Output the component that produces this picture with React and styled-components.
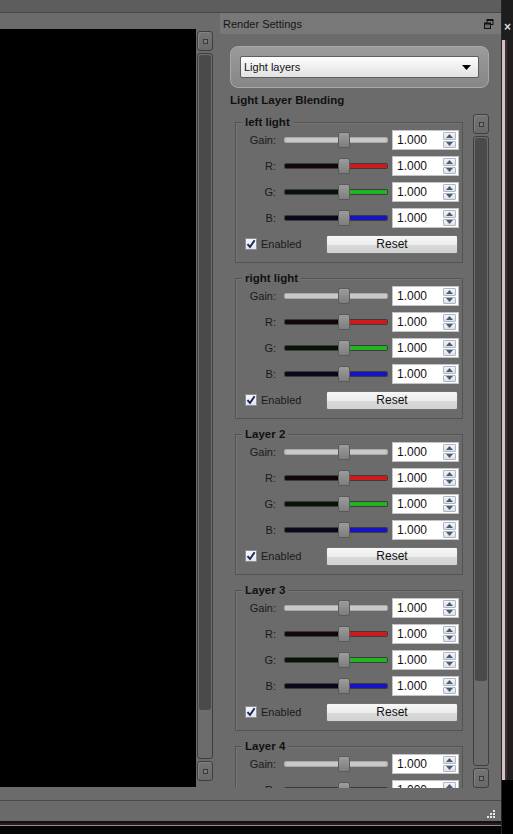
import React from "react";
import styled, { createGlobalStyle } from "styled-components";

const GlobalStyle = createGlobalStyle`
    * { box-sizing: border-box; }
    body {
        margin: 0;
        background: #000;
        font-family: "Liberation Sans", Arial, sans-serif;
    }
`;

const layers = ['left light', 'right light', 'Layer 2', 'Layer 3', 'Layer 4'];

const channels = [
    { label: 'Gain:', kind: 'gain' },
    { label: 'R:', kind: 'r' },
    { label: 'G:', kind: 'g' },
    { label: 'B:', kind: 'b' },
];

const trackColors = {
    gain: ['#c8c8c8', '#c8c8c8'],
    r: ['#120707', '#d01a1a'],
    g: ['#081208', '#22b422'],
    b: ['#08081a', '#1414c4'],
};

function RestoreIcon() {
    return (
        <svg width="10" height="10" viewBox="0 0 10 10">
            <rect x="3" y="0.5" width="6" height="5" fill="none" stroke="#111" strokeWidth="1" />
            <rect x="3" y="0.5" width="6" height="1.5" fill="#111" />
            <rect x="0.5" y="4" width="6" height="5.5" fill="#6b6b6b" stroke="#111" strokeWidth="1" />
            <rect x="0.5" y="4" width="6" height="1.5" fill="#111" />
        </svg>
    );
}

function ScrollBar({ thumb }) {
    return (
        <VScroll>
            <ScrollButton><ScrollGlyph /></ScrollButton>
            <Track>
                <Thumb style={{ height: thumb }} />
            </Track>
            <ScrollButton><ScrollGlyph /></ScrollButton>
        </VScroll>
    );
}

function Slider({ kind, pos }) {
    const [left, right] = trackColors[kind];
    return (
        <SliderBox>
            <SliderTrack $left={left} $right={right} $pos={pos} $light={kind === 'gain'} />
            <SliderThumb style={{ left: `calc(${pos}% - 6px)` }} />
        </SliderBox>
    );
}

function Spinner({ value }) {
    return (
        <Spin>
            <SpinValue>{value}</SpinValue>
            <SpinButtons>
                <SpinArrow>
                    <svg width="7" height="4" viewBox="0 0 7 4"><path d="M0 4 L3.5 0 L7 4 Z" fill="#4d5b72" /></svg>
                </SpinArrow>
                <SpinArrow>
                    <svg width="7" height="4" viewBox="0 0 7 4"><path d="M0 0 L3.5 4 L7 0 Z" fill="#4d5b72" /></svg>
                </SpinArrow>
            </SpinButtons>
        </Spin>
    );
}

function LayerGroup({ name }) {
    return (
        <Group>
            <Legend>{name}</Legend>
            {channels.map((c) => (
                <Row key={c.label}>
                    <RowLabel>{c.label}</RowLabel>
                    <Slider kind={c.kind} pos={58} />
                    <Spinner value="1.000" />
                </Row>
            ))}
            <Row>
                <Check>
                    <CheckBox>
                        <svg width="10" height="10" viewBox="0 0 10 10">
                            <path d="M1.5 5.2 L4 8 L8.6 1.2" fill="none" stroke="#1c2a63" strokeWidth="2" />
                        </svg>
                    </CheckBox>
                    Enabled
                </Check>
                <ResetButton>Reset</ResetButton>
            </Row>
        </Group>
    );
}

export default function App() {
    return <>
        <GlobalStyle />
        <Frame>
            <Window>
                <TopStrip />
                <Body>
                    <LeftPane>
                        <Viewport />
                        <LeftScroll>
                            <ScrollBar thumb={655} />
                        </LeftScroll>
                    </LeftPane>
                    <RightPane>
                        <TitleBar>
                            <span>Render Settings</span>
                            <RestoreIcon />
                        </TitleBar>
                        <DropBox>
                            <Select>
                                <span>Light layers</span>
                                <svg width="9" height="5" viewBox="0 0 9 5"><path d="M0 0 L9 0 L4.5 5 Z" fill="#000" /></svg>
                            </Select>
                        </DropBox>
                        <Heading>Light Layer Blending</Heading>
                        <ScrollArea>
                            <Groups>
                                {layers.map((l) => <LayerGroup key={l} name={l} />)}
                            </Groups>
                            <RightScroll>
                                <ScrollBar thumb={543} />
                            </RightScroll>
                        </ScrollArea>
                    </RightPane>
                </Body>
                <StatusBar>
                    <svg width="9" height="9" viewBox="0 0 9 9">
                        {[[7, 1], [4, 4], [7, 4], [1, 7], [4, 7], [7, 7]].map(([x, y]) => (
                            <rect key={`${x}-${y}`} x={x} y={y} width="2" height="2" fill="#e8e8e8" />
                        ))}
                    </svg>
                </StatusBar>
                <Footer />
            </Window>
            <Edge>
                <EdgeCap>×</EdgeCap>
                <EdgeBody />
            </Edge>
        </Frame>
    </>;
}

const Frame = styled.div`
    display: flex;
    width: 513px;
    height: 834px;
    overflow: hidden;
    background: #000;
`;

const Window = styled.div`
    width: 502px;
    display: flex;
    flex-direction: column;
    background: #6b6b6b;
    border-right: 1px solid #262626;
`;

const TopStrip = styled.div`
    height: 13px;
    background: #5d5d5d;
    border-bottom: 1px solid #474747;
`;

const Body = styled.div`
    height: 787px;
    display: flex;
`;

const LeftPane = styled.div`
    width: 213px;
    display: flex;
    padding: 16px 0 13px 0;
`;

const Viewport = styled.div`
    width: 196px;
    background: #000;
`;

const LeftScroll = styled.div`
    width: 16px;
    margin: 2px 0 6px 1px;
    display: flex;
`;

const RightScroll = styled.div`
    width: 16px;
    margin-left: 10px;
    display: flex;
`;

const VScroll = styled.div`
    flex: 1;
    display: flex;
    flex-direction: column;
    gap: 2px;
`;

const ScrollButton = styled.div`
    height: 20px;
    border: 1px solid #3e3e3e;
    border-radius: 3px;
    background: linear-gradient(#747474, #696969);
    box-shadow: inset 1px 1px 0 #828282;
    display: flex;
    align-items: center;
    justify-content: center;
`;

const ScrollGlyph = styled.div`
    width: 5px;
    height: 5px;
    border: 1px solid #3a3a3a;
    background: #7a7a7a;
`;

const Track = styled.div`
    flex: 1;
    border: 1px solid #3e3e3e;
    border-radius: 3px;
    background: #6c6c6c;
    padding: 1px;
`;

const Thumb = styled.div`
    border-radius: 3px;
    background: #4a4a4a;
`;

const RightPane = styled.div`
    flex: 1;
    margin-left: 7px;
    display: flex;
    flex-direction: column;
`;

const TitleBar = styled.div`
    height: 21px;
    display: flex;
    align-items: center;
    justify-content: space-between;
    padding: 0 7px 0 3px;
    background: #787878;
    font-size: 11px;
    color: #161616;
`;

const DropBox = styled.div`
    height: 42px;
    margin: 12px 12px 0 10px;
    padding: 0 9px;
    display: flex;
    align-items: center;
    border: 1px solid #a8a8a8;
    border-radius: 8px;
    background: linear-gradient(#9b9b9b, #868686);
`;

const Select = styled.div`
    flex: 1;
    height: 22px;
    display: flex;
    align-items: center;
    justify-content: space-between;
    padding: 0 7px 0 3px;
    border: 1px solid #5e5e5e;
    border-radius: 2px;
    background: linear-gradient(#fdfdfd, #e2e2e2);
    font-size: 11px;
    color: #111;
`;

const Heading = styled.div`
    margin: 5px 0 0 10px;
    font-size: 11.5px;
    line-height: 14px;
    font-weight: bold;
    color: #111;
`;

const ScrollArea = styled.div`
    flex: 1;
    display: flex;
    margin: 7px 0 12px 0;
    padding-left: 15px;
    min-height: 0;
`;

const Groups = styled.div`
    width: 228px;
    display: flex;
    flex-direction: column;
    gap: 15px;
    padding-top: 8px;
    overflow: hidden;
`;

const Group = styled.div`
    position: relative;
    flex-shrink: 0;
    padding: 4px 0 5px 0;
    border: 1px solid #535353;
    box-shadow: inset 1px 1px 0 #767676;
`;

const Legend = styled.div`
    position: absolute;
    top: -8px;
    left: 6px;
    padding: 0 3px;
    background: #6b6b6b;
    font-size: 11.5px;
    line-height: 14px;
    font-weight: bold;
    color: #111;
`;

const Row = styled.div`
    height: 26px;
    display: flex;
    align-items: center;
`;

const RowLabel = styled.div`
    width: 40px;
    margin-right: 9px;
    text-align: right;
    font-size: 11px;
    color: #1a1a1a;
`;

const SliderBox = styled.div`
    position: relative;
    width: 102px;
    height: 26px;
    margin-right: 5px;
    display: flex;
    align-items: center;
`;

const SliderTrack = styled.div`
    width: 100%;
    height: 4px;
    border-radius: 1px;
    background: linear-gradient(to right, ${(p) => p.$left} 0 ${(p) => p.$pos}%, ${(p) => p.$right} ${(p) => p.$pos}% 100%);
    box-shadow: ${(p) => (p.$light ? '0 0 0 1px #a9a9a9' : '0 0 0 1px #3c3c3c')};
`;

const SliderThumb = styled.div`
    position: absolute;
    top: 5px;
    width: 12px;
    height: 16px;
    border: 1px solid #5a5a5a;
    border-radius: 2px;
    background: linear-gradient(#9c9c9c, #7e7e7e);
`;

const Spin = styled.div`
    width: 67px;
    height: 20px;
    display: flex;
    align-items: center;
    justify-content: space-between;
    padding: 0 2px 0 4px;
    background: #fff;
    border: 1px solid #c4c4c4;
`;

const SpinValue = styled.span`
    font-size: 12px;
    color: #111;
`;

const SpinButtons = styled.div`
    width: 13px;
    height: 16px;
    display: flex;
    flex-direction: column;
    gap: 1px;
`;

const SpinArrow = styled.div`
    flex: 1;
    display: flex;
    align-items: center;
    justify-content: center;
    border: 1px solid #aeb6c4;
    border-radius: 1px;
    background: linear-gradient(#f3f5f8, #dde2ea);
`;

const Check = styled.label`
    display: flex;
    align-items: center;
    gap: 4px;
    margin-left: 9px;
    width: 81px;
    font-size: 11px;
    color: #1a1a1a;
`;

const CheckBox = styled.span`
    width: 12px;
    height: 12px;
    display: flex;
    align-items: center;
    justify-content: center;
    border: 1px solid #8c8e92;
    background: linear-gradient(#f6f6f6, #e4e6ea);
`;

const ResetButton = styled.button`
    width: 132px;
    height: 19px;
    padding: 0;
    border: 1px solid #727272;
    border-radius: 2px;
    background: linear-gradient(#f7f7f7 0%, #ececec 50%, #d9d9d9 51%, #d2d2d2 100%);
    font-family: "Liberation Sans", Arial, sans-serif;
    font-size: 12px;
    color: #111;
`;

const StatusBar = styled.div`
    height: 21px;
    display: flex;
    align-items: flex-end;
    justify-content: flex-end;
    padding: 0 6px 3px 0;
    border-top: 1px solid #4a4a4a;
    background: #6a6a6a;
`;

const Footer = styled.div`
    height: 13px;
    background: linear-gradient(#1a0d0f 0 2px, #2b1b1d 2px 4px, #8c8c8c 4px 5px, #050505 5px);
`;

const Edge = styled.div`
    flex: 1;
    display: flex;
    flex-direction: column;
    background: #000;
`;

const EdgeCap = styled.div`
    height: 40px;
    padding: 20px 0 0 2px;
    background: #1d1d1d;
    color: #d8d8d8;
    font-size: 12px;
    font-weight: bold;
    line-height: 14px;
`;

const EdgeBody = styled.div`
    height: 740px;
    background: linear-gradient(to right, #d6c2c2 0 3px, #3a3334 3px 5px, #221e1f 5px);
`;
